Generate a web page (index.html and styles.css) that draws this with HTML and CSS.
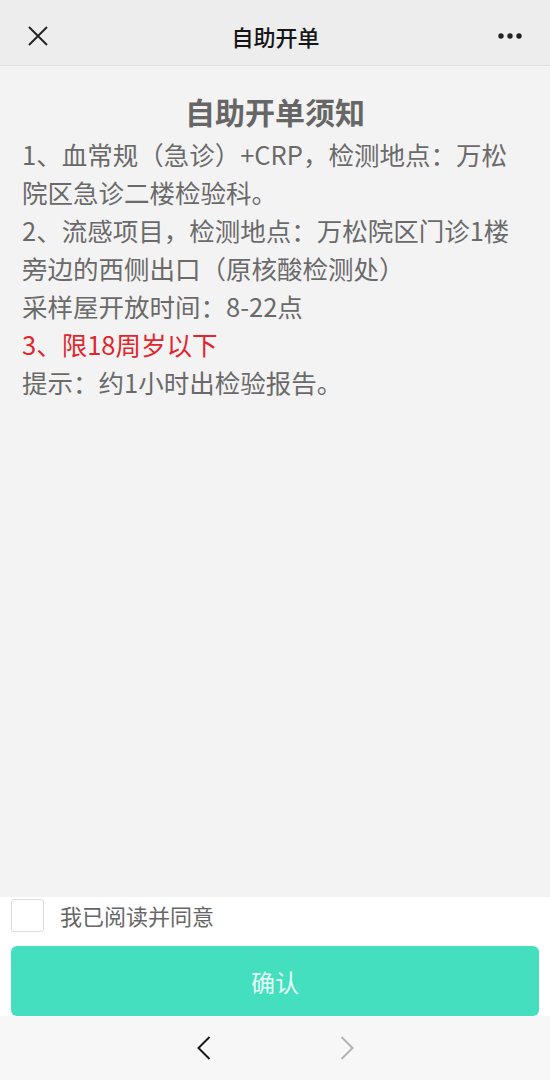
FILE: index.html
```html
<!DOCTYPE html>
<html lang="zh-CN">
<head>
    <meta charset="UTF-8">
    <meta name="viewport" content="width=device-width, initial-scale=1.0">
    <title>自助开单</title>
    <link rel="stylesheet" href="styles.css">
</head>
<body>
    <div class="page">
        <div class="topbar">
            <span class="topbar-close">
                <svg width="20" height="20" viewBox="0 0 20 20">
                    <path d="M1 1 L19 19 M19 1 L1 19" stroke="#222" stroke-width="1.9" fill="none"/>
                </svg>
            </span>
            <span class="topbar-title">自助开单</span>
            <span class="topbar-more">
                <svg width="26" height="8" viewBox="0 0 26 8">
                    <circle cx="4" cy="4" r="2.7" fill="#222"/>
                    <circle cx="13" cy="4" r="2.7" fill="#222"/>
                    <circle cx="22" cy="4" r="2.7" fill="#222"/>
                </svg>
            </span>
        </div>

        <div class="notice">
            <h1 class="notice-title">自助开单须知</h1>
            <div class="notice-text">
                <p>1、血常规（急诊）+CRP，检测地点：万松<br>院区急诊二楼检验科。</p>
                <p>2、流感项目，检测地点：万松院区门诊1楼<br>旁边的西侧出口（原核酸检测处）</p>
                <p>采样屋开放时间：8-22点</p>
                <p class="red">3、限18周岁以下</p>
                <p>提示：约1小时出检验报告。</p>
            </div>
        </div>

        <div class="agree">
            <label class="agree-row">
                <span class="checkbox"></span>
                <span class="agree-text">我已阅读并同意</span>
            </label>
            <button class="confirm">确认</button>
        </div>

        <div class="navbar">
            <svg width="14" height="24" viewBox="0 0 14 24">
                <path d="M12.5 1 L1.5 12 L12.5 23" stroke="#1a1a1a" stroke-width="2" fill="none"/>
            </svg>
            <svg width="14" height="24" viewBox="0 0 14 24">
                <path d="M1.5 1 L12.5 12 L1.5 23" stroke="#b3b3b3" stroke-width="2" fill="none"/>
            </svg>
        </div>
    </div>
</body>
</html>
```

FILE: styles.css
```css
html, body {
    margin: 0;
    padding: 0;
}
body {
    font-family: "Noto Sans CJK SC", "Noto Sans", sans-serif;
    background-color: #f4f3f4;
}
.page {
    display: flex;
    flex-direction: column;
    height: 1080px;
}

/* top bar */
.topbar {
    flex: none;
    box-sizing: border-box;
    height: 66px;
    display: flex;
    align-items: center;
    justify-content: space-between;
    padding: 6px 27px 0 28px;
    background-color: #ededed;
    border-bottom: 1px solid #e2e2e2;
}
.topbar-close, .topbar-more {
    width: 26px;
    display: flex;
}
.topbar-more {
    justify-content: flex-end;
}
.topbar-title {
    font-size: 22px;
    font-weight: 500;
    color: #161616;
}

/* notice */
.notice {
    flex: 1;
    padding: 26px 22px 0;
}
.notice-title {
    margin: 0 0 5px;
    text-align: center;
    font-size: 30px;
    line-height: 38px;
    font-weight: 700;
    color: #666;
}
.notice-text {
    font-size: 25.5px;
    line-height: 38px;
    color: #6a6a6a;
    white-space: nowrap;
}
.notice-text p {
    margin: 0;
}
.notice-text .red {
    color: #e0262c;
}

/* agree + confirm */
.agree {
    flex: none;
    background-color: #fff;
    padding: 1px 11px 0;
}
.agree-row {
    display: flex;
    align-items: center;
    height: 34px;
}
.checkbox {
    width: 33px;
    height: 33px;
    border: 1px solid #dcdcdc;
    border-radius: 3px;
    box-sizing: border-box;
}
.agree-text {
    margin-left: 16px;
    font-size: 22px;
    color: #666;
}
.confirm {
    display: block;
    width: 100%;
    height: 70px;
    margin-top: 14px;
    border: none;
    border-radius: 6px;
    background-color: #43dfbf;
    color: #e9fbf6;
    font-family: "Noto Sans CJK SC", sans-serif;
    font-size: 24px;
}

/* bottom nav */
.navbar {
    height: 64px;
    flex: none;
    display: flex;
    align-items: center;
    justify-content: center;
    gap: 129px;
    background-color: #f7f7f7;
}
```
